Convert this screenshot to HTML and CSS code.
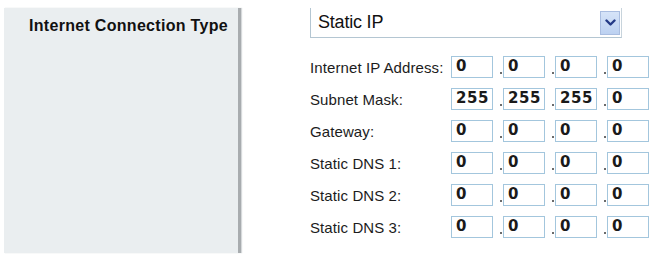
FILE: index.html
```html
<!DOCTYPE html>
<html>
<head>
<meta charset="utf-8">
<link rel="stylesheet" href="styles.css">
</head>
<body>
<div class="page">
  <aside class="side">
    <h2 class="side-title">Internet Connection Type</h2>
  </aside>
  <main class="content">
    <div class="select">
      <span class="select-value">Static IP</span>
      <span class="select-btn">
        <svg width="11" height="8" viewBox="0 0 11 8"><path d="M1.5 1.5 L5.5 5.5 L9.5 1.5" fill="none" stroke="#243a86" stroke-width="2.4" stroke-linecap="round" stroke-linejoin="round"/></svg>
      </span>
    </div>
    <div class="rows">
      <div class="row"><span class="label">Internet IP Address:</span><div class="ip"><span class="box">0</span><span class="dot"></span><span class="box">0</span><span class="dot"></span><span class="box">0</span><span class="dot"></span><span class="box">0</span></div></div>
      <div class="row"><span class="label">Subnet Mask:</span><div class="ip"><span class="box">255</span><span class="dot"></span><span class="box">255</span><span class="dot"></span><span class="box">255</span><span class="dot"></span><span class="box">0</span></div></div>
      <div class="row"><span class="label">Gateway:</span><div class="ip"><span class="box">0</span><span class="dot"></span><span class="box">0</span><span class="dot"></span><span class="box">0</span><span class="dot"></span><span class="box">0</span></div></div>
      <div class="row"><span class="label">Static DNS 1:</span><div class="ip"><span class="box">0</span><span class="dot"></span><span class="box">0</span><span class="dot"></span><span class="box">0</span><span class="dot"></span><span class="box">0</span></div></div>
      <div class="row"><span class="label">Static DNS 2:</span><div class="ip"><span class="box">0</span><span class="dot"></span><span class="box">0</span><span class="dot"></span><span class="box">0</span><span class="dot"></span><span class="box">0</span></div></div>
      <div class="row"><span class="label">Static DNS 3:</span><div class="ip"><span class="box">0</span><span class="dot"></span><span class="box">0</span><span class="dot"></span><span class="box">0</span><span class="dot"></span><span class="box">0</span></div></div>
    </div>
  </main>
</div>
</body>
</html>
```
FILE: styles.css
```css
html, body {
  margin: 0;
  padding: 0;
  background: #ffffff;
}
body {
  width: 656px;
  height: 256px;
  overflow: hidden;
  font-family: "Liberation Sans", Arial, sans-serif;
  color: #1a1a1a;
}
.page {
  display: flex;
  align-items: flex-start;
}
.side {
  margin: 8px 0 0 4px;
  width: 234px;
  height: 245px;
  background: #eaeef0;
  border-right: 3px solid #a8acaf;
  box-shadow: 1px 0 1px #d6d9db;
}
.side-title {
  margin: 0;
  padding: 9px 0 0 25px;
  font-size: 16px;
  font-weight: bold;
  letter-spacing: 0.3px;
  color: #111;
  line-height: 18px;
}
.content {
  margin-left: 69px;
  padding-top: 8px;
  width: 345px;
}
.select {
  width: 310px;
  height: 29px;
  border-left: 1px solid #b4c6d2;
  border-bottom: 1px solid #b4c6d2;
  border-right: 1px solid #c8d4dc;
  display: flex;
  align-items: center;
  justify-content: space-between;
}
.select-value {
  padding-left: 7px;
  font-size: 18px;
  color: #111;
  letter-spacing: -0.2px;
}
.select-btn {
  width: 20px;
  height: 24px;
  margin-right: 1px;
  background: linear-gradient(#d6e4f8, #bcd1f1);
  border: 1px solid #a9bde0;
  display: flex;
  align-items: center;
  justify-content: center;
  box-sizing: border-box;
}
.rows {
  margin-top: 13px;
  display: flex;
  flex-direction: column;
}
.row {
  height: 32px;
  display: flex;
  align-items: center;
}
.label {
  width: 141px;
  font-size: 15px;
  letter-spacing: 0.1px;
  color: #1c1c1c;
}
.ip {
  display: flex;
  align-items: center;
}
.box {
  width: 42px;
  height: 22px;
  box-sizing: border-box;
  border: 1.5px solid #a3c6dd;
  padding-left: 4px;
  font-family: "DejaVu Sans", sans-serif;
  font-weight: bold;
  font-size: 15px;
  letter-spacing: 0.6px;
  line-height: 19px;
  color: #1a1a1a;
}
.dot {
  width: 10px;
  height: 22px;
  position: relative;
}
.dot::after {
  content: "";
  position: absolute;
  right: 1px;
  bottom: 4px;
  width: 2px;
  height: 2px;
  background: #6b6b6b;
}
```
